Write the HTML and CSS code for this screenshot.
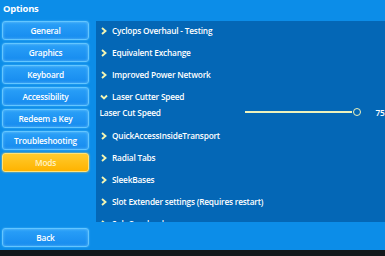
FILE: index.html
```html
<!DOCTYPE html>
<html lang="en">
  <head>
    <meta charset="UTF-8" />
    <title>Options</title>
    <link rel="stylesheet" href="styles.css">
  </head>
  <body>
    <div class="screen">
      <div class="title">Options</div>

      <div class="main">
        <!-- Tabs -->
        <div class="tabs">
          <div class="tab">General</div>
          <div class="tab">Graphics</div>
          <div class="tab">Keyboard</div>
          <div class="tab">Accessibility</div>
          <div class="tab">Redeem a Key</div>
          <div class="tab">Troubleshooting</div>
          <div class="tab active">Mods</div>
          <div class="tab back">Back</div>
        </div>

        <!-- Mod list -->
        <div class="panel">
          <div class="mod">
            <svg class="chev" viewBox="0 0 8 8"><polyline points="2,1 5.5,4 2,7" /></svg>
            <span>Cyclops Overhaul - Testing</span>
          </div>
          <div class="mod">
            <svg class="chev" viewBox="0 0 8 8"><polyline points="2,1 5.5,4 2,7" /></svg>
            <span>Equivalent Exchange</span>
          </div>
          <div class="mod">
            <svg class="chev" viewBox="0 0 8 8"><polyline points="2,1 5.5,4 2,7" /></svg>
            <span>Improved Power Network</span>
          </div>
          <div class="mod-group">
            <div class="mod">
              <svg class="chev" viewBox="0 0 8 8"><polyline points="1,2.5 4,5.5 7,2.5" /></svg>
              <span>Laser Cutter Speed</span>
            </div>
            <div class="setting">
              <span class="setting-label">Laser Cut Speed</span>
              <div class="slider">
                <div class="track"></div>
                <div class="knob"></div>
              </div>
              <span class="value">75</span>
            </div>
          </div>
          <div class="mod">
            <svg class="chev" viewBox="0 0 8 8"><polyline points="2,1 5.5,4 2,7" /></svg>
            <span>QuickAccessInsideTransport</span>
          </div>
          <div class="mod">
            <svg class="chev" viewBox="0 0 8 8"><polyline points="2,1 5.5,4 2,7" /></svg>
            <span>Radial Tabs</span>
          </div>
          <div class="mod">
            <svg class="chev" viewBox="0 0 8 8"><polyline points="2,1 5.5,4 2,7" /></svg>
            <span>SleekBases</span>
          </div>
          <div class="mod">
            <svg class="chev" viewBox="0 0 8 8"><polyline points="2,1 5.5,4 2,7" /></svg>
            <span>Slot Extender settings (Requires restart)</span>
          </div>
          <div class="mod">
            <svg class="chev" viewBox="0 0 8 8"><polyline points="2,1 5.5,4 2,7" /></svg>
            <span>Sub Overhaul</span>
          </div>
        </div>
      </div>

      <div class="footer"></div>
    </div>
  </body>
</html>
```

FILE: styles.css
```css
/* Global Styles */
* {
  margin: 0;
  padding: 0;
  box-sizing: border-box;
  font-family: "Open Sans", "Noto Sans", sans-serif;
}

body {
  width: 385px;
  height: 256px;
  overflow: hidden;
  background-color: #0c8de8;
  color: #fff;
}

.screen {
  display: flex;
  flex-direction: column;
  height: 256px;
}

.title {
  height: 21px;
  padding-left: 3px;
  font-size: 9.4px;
  font-weight: 700;
  letter-spacing: -0.2px;
  line-height: 18px;
}

.main {
  display: flex;
  height: 229px;
}

/* Tabs */
.tabs {
  display: flex;
  flex-direction: column;
  gap: 3px;
  width: 87px;
  margin-left: 2px;
  padding-bottom: 3px;
}

.tab {
  display: flex;
  justify-content: center;
  align-items: center;
  height: 19px;
  border: 1px solid #63c6ff;
  border-radius: 3px;
  background: linear-gradient(#2aa0f8, #168bef);
  box-shadow: 0 0 2px #49b6ff, inset 0 0 3px rgba(150, 220, 255, 0.6);
  font-size: 8.3px;
  font-weight: 600;
  letter-spacing: -0.2px;
}

.tab.active {
  border-color: #ffe27a;
  background: linear-gradient(#ffcb2e, #ffb300);
  box-shadow: 0 0 2px #ffd24a;
  color: #fff4c8;
}

.tab.back {
  margin-top: auto;
}

/* Mod list */
.panel {
  display: flex;
  flex-direction: column;
  gap: 3px;
  flex: 1;
  height: 201px;
  margin-left: 7px;
  overflow: hidden;
  background-color: #0467b6;
}

.mod {
  display: flex;
  align-items: center;
  flex-shrink: 0;
  height: 19px;
  padding-left: 4px;
  font-size: 8.3px;
  font-weight: 600;
  letter-spacing: -0.2px;
  white-space: nowrap;
}

.chev {
  width: 8px;
  height: 8px;
  margin-right: 4px;
  fill: none;
  stroke: #f2f5b4;
  stroke-width: 1.9;
}

.mod-group {
  display: flex;
  flex-direction: column;
  flex-shrink: 0;
}

.setting {
  display: flex;
  align-items: center;
  height: 17px;
  padding: 0 0 5px 3.5px;
  font-size: 8.3px;
  font-weight: 600;
  letter-spacing: -0.2px;
}

.setting-label {
  width: 145.5px;
}

.slider {
  display: flex;
  align-items: center;
}

.track {
  width: 107px;
  height: 1.5px;
  background-color: #eef2bc;
}

.knob {
  width: 8px;
  height: 8px;
  margin-left: 0.5px;
  border: 1.6px solid #eef2bc;
  border-radius: 50%;
  background-color: #0467b6;
}

.value {
  margin-left: 15px;
}

.footer {
  height: 6px;
  background-color: #13171b;
}
```
